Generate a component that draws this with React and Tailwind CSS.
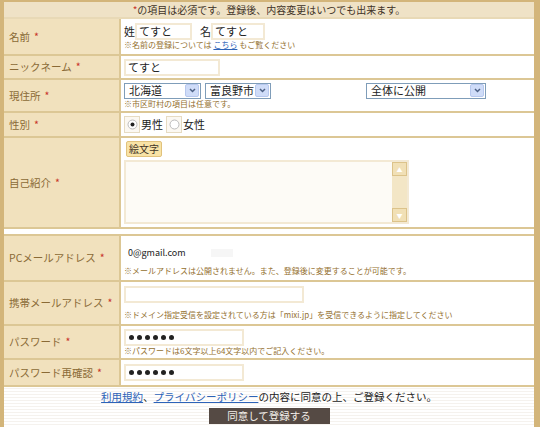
import React from "react";

const font = { fontFamily: '"MS UI Gothic", "Noto Sans CJK JP", sans-serif' };

function Star() {
  return <span className="ml-[4px] text-[#c8342a]">*</span>;
}

function Label({ children }) {
  return (
    <div className="flex w-[117px] shrink-0 items-center border-r-2 border-[#dcc795] bg-[#f1e1bd] pl-[5px] text-[10.5px] text-[#8a6a36]">
      {children}
      <Star />
    </div>
  );
}

function Row({ label, h, children }) {
  return (
    <div className="flex border-b-2 border-[#dcc795]" style={{ height: h }}>
      <Label>{label}</Label>
      <div className="flex flex-1 flex-col justify-center bg-white pl-[3px]">{children}</div>
    </div>
  );
}

function Note({ children }) {
  return <p className="text-[8px] leading-[10px] text-[#94702f]">{children}</p>;
}

function Input({ w, value, dots }) {
  return (
    <div
      className="flex h-[17px] items-center border-2 border-[#f3e9d4] bg-white px-[2px] text-[11px] text-[#222]"
      style={{ width: w }}
    >
      {dots ? (
        <span className="flex gap-[3px] pl-[1px]">
          {[0, 1, 2, 3, 4, 5].map((i) => (
            <span key={i} className="h-[5px] w-[5px] rounded-full bg-[#222]" />
          ))}
        </span>
      ) : (
        value
      )}
    </div>
  );
}

function Select({ w, value }) {
  return (
    <div className="flex h-[16px] items-center border border-[#7f9db9] bg-white text-[11px] text-[#222]" style={{ width: w }}>
      <span className="flex-1 pl-[4px]">{value}</span>
      <span className="mr-[1px] flex h-[13px] w-[14px] items-center justify-center rounded-[2px] border border-[#b7c8ee] bg-[#cfdcf8]">
        <svg width="7" height="5" viewBox="0 0 7 5">
          <path d="M1 1 L3.5 3.5 L6 1" fill="none" stroke="#4d6185" strokeWidth="1.5" />
        </svg>
      </span>
    </div>
  );
}

function Radio({ checked }) {
  return (
    <span className="flex h-[17px] w-[16px] items-center justify-center border border-[#e6dbc2] bg-[#fbf8f2]">
      <svg width="11" height="11" viewBox="0 0 11 11">
        <circle cx="5.5" cy="5.5" r="4.5" fill="#fff" stroke="#bbb" />
        {checked && <circle cx="5.5" cy="5.5" r="2" fill="#222" />}
      </svg>
    </span>
  );
}

export default function App() {
  return (
    <div className="h-[427px] w-[540px] overflow-hidden bg-white" style={font}>
      <div className="flex h-full flex-col border-t-2 border-l-4 border-r-6 border-[#d3b57a] border-b-0">
        <div className="flex h-[17px] shrink-0 items-center justify-center border-b-2 border-[#e8d9b6] bg-[#efe2c6] text-[10px] text-[#3f3326]">
          <span className="text-[#c8342a]">*</span>の項目は必須です。登録後、内容変更はいつでも出来ます。
        </div>

        <Row label="名前" h={37}>
          <div className="flex items-center text-[11px] text-[#222]">
            <span>姓</span>
            <Input w={57} value="てすと" />
            <span className="ml-[8px]">名</span>
            <Input w={54} value="てすと" />
          </div>
          <Note>
            ※名前の登録については <span className="text-[#2d63b8] underline">こちら</span> もご覧ください
          </Note>
        </Row>

        <Row label="ニックネーム" h={24}>
          <Input w={96} value="てすと" />
        </Row>

        <Row label="現住所" h={33}>
          <div className="flex items-center">
            <Select w={77} value="北海道" />
            <span className="w-[4px]" />
            <Select w={66} value="富良野市" />
            <span className="w-[95px]" />
            <Select w={120} value="全体に公開" />
          </div>
          <Note>※市区町村の項目は任意です。</Note>
        </Row>

        <Row label="性別" h={25}>
          <div className="flex items-center text-[11px] text-[#222]">
            <Radio checked />
            <span className="ml-[1px] mr-[3px]">男性</span>
            <Radio />
            <span className="ml-[1px]">女性</span>
          </div>
        </Row>

        <Row label="自己紹介" h={91}>
          <div className="flex flex-col">
            <span className="ml-[2px] w-fit rounded-[2px] border border-[#e1c27c] bg-[#f8e3a6] px-[2px] text-[10px] leading-[14px] text-[#3f3326]">
              絵文字
            </span>
            <div className="mt-[3px] flex h-[64px] w-[285px] border-2 border-[#f3e9d4] bg-[#fdfbf6]">
              <div className="flex-1" />
              <div className="flex w-[15px] flex-col justify-between bg-[#f3e6c6]">
                <span className="flex h-[14px] items-center justify-center border border-[#dcc38a] bg-[#f1e0b6] text-[6px] text-white">▲</span>
                <span className="flex h-[14px] items-center justify-center border border-[#dcc38a] bg-[#f1e0b6] text-[6px] text-white">▼</span>
              </div>
            </div>
          </div>
        </Row>

        <div className="h-[7px] shrink-0 border-b-2 border-[#dcc795] bg-white" />

        <Row label="PCメールアドレス" h={46}>
          <div className="mt-[6px] flex items-center pl-[4px] text-[9px] text-[#222]">
            0@gmail.com
            <span className="ml-[25px] h-[8px] w-[22px] bg-[#f6f6f6]" />
          </div>
          <div className="mt-[6px]">
            <Note>※メールアドレスは公開されません。また、登録後に変更することが可能です。</Note>
          </div>
        </Row>

        <Row label="携帯メールアドレス" h={44}>
          <Input w={180} value="" />
          <div className="mt-[7px]">
            <Note>※ドメイン指定受信を設定されている方は「mixi.jp」を受信できるように指定してください</Note>
          </div>
        </Row>

        <Row label="パスワード" h={34}>
          <Input w={120} dots />
          <Note>※パスワードは6文字以上64文字以内でご記入ください。</Note>
        </Row>

        <Row label="パスワード再確認" h={27}>
          <Input w={120} dots />
        </Row>

        <div className="flex flex-1 flex-col items-center bg-[repeating-linear-gradient(0deg,#ffffff_0px,#ffffff_2px,#f5f2ee_2px,#f5f2ee_3px)] pt-[3px]">
          <p className="text-[10.5px] leading-[14px] text-[#222]">
            <span className="text-[#2d63b8] underline">利用規約</span>、
            <span className="text-[#2d63b8] underline">プライバシーポリシー</span>の内容に同意の上、ご登録ください。
          </p>
          <button
            type="button"
            className="mt-[4px] flex h-[16px] w-[121px] items-center justify-center bg-[#554a44] text-[10.5px] text-[#f2eee8]"
          >
            同意して登録する
          </button>
        </div>
      </div>
    </div>
  );
}
